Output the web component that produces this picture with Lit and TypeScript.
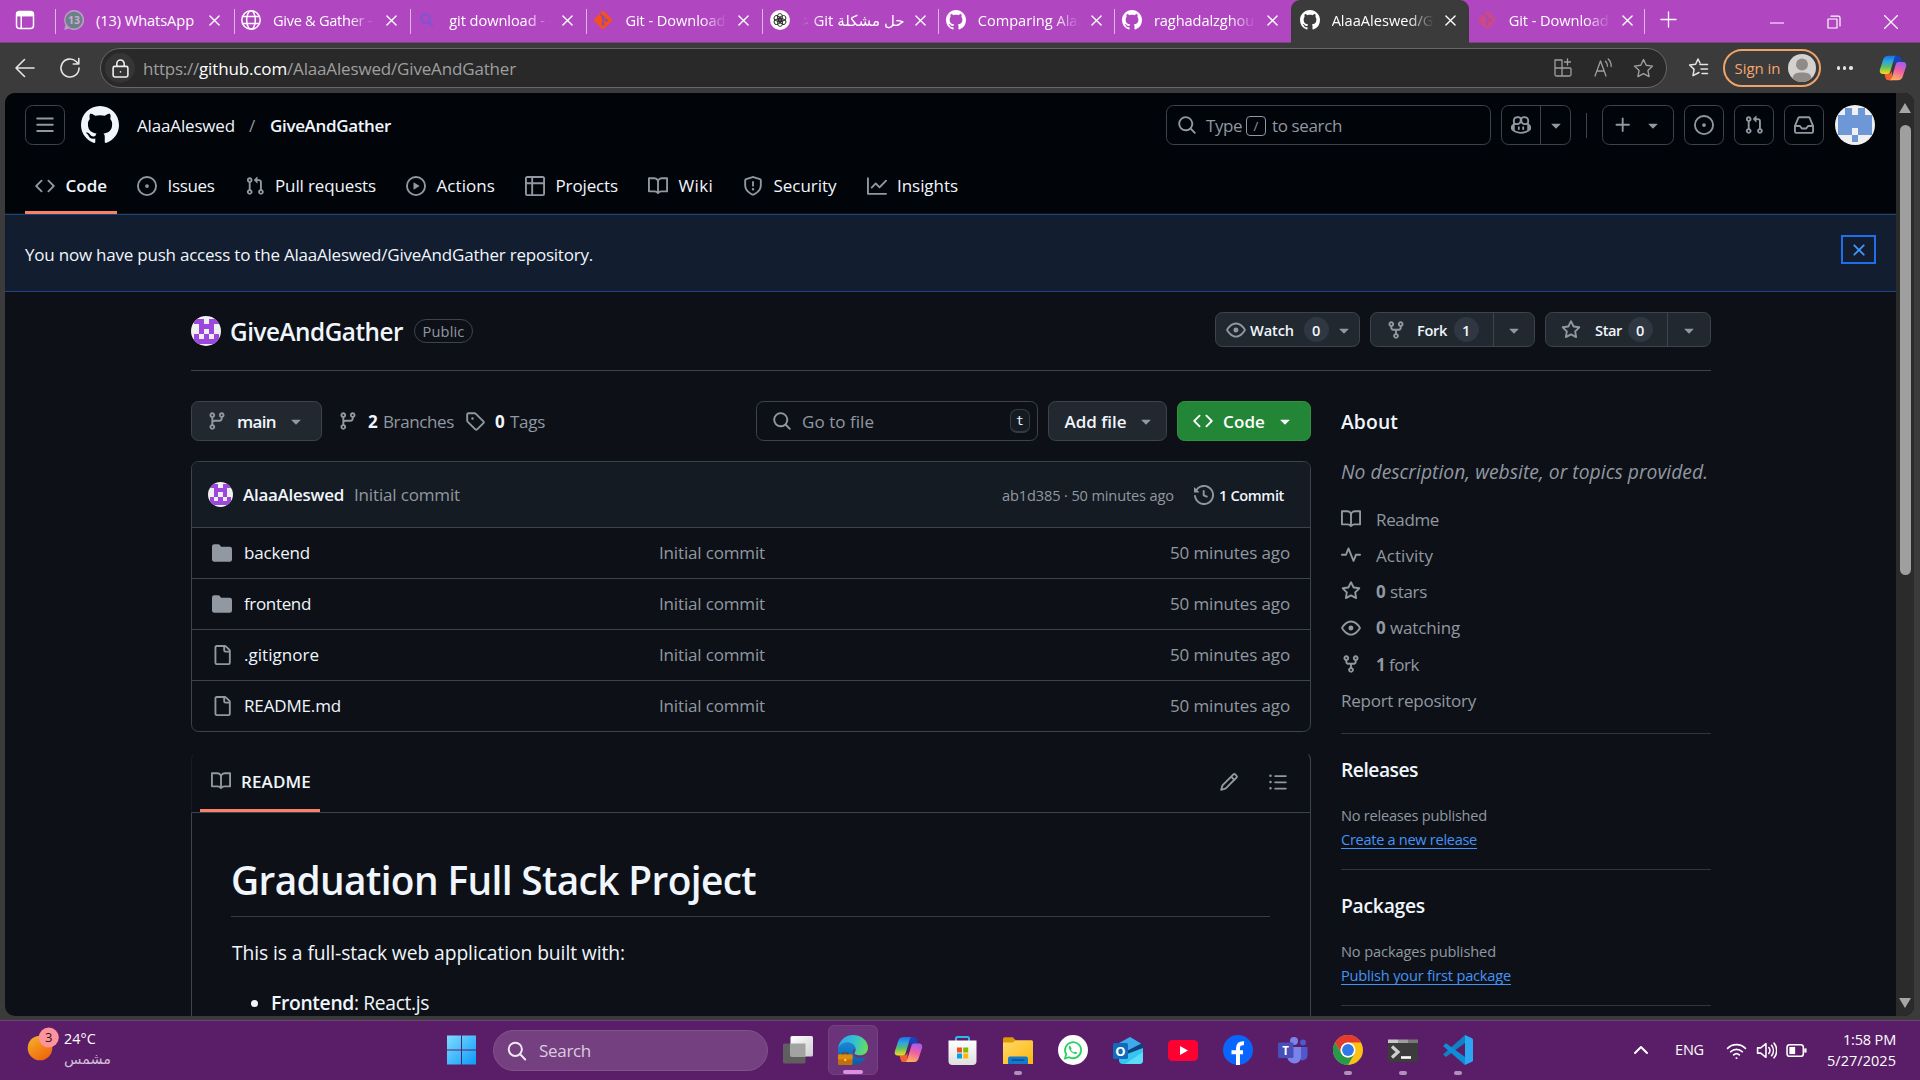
import { LitElement, html, svg, css, nothing } from "lit";
import { customElement, property } from "lit/decorators.js";

const P: Record<string, string> = {
  bars: "M1 2.75A.75.75 0 0 1 1.75 2h12.5a.75.75 0 0 1 0 1.5H1.75A.75.75 0 0 1 1 2.75Zm0 5A.75.75 0 0 1 1.75 7h12.5a.75.75 0 0 1 0 1.5H1.75A.75.75 0 0 1 1 7.75ZM1.75 12h12.5a.75.75 0 0 1 0 1.5H1.75a.75.75 0 0 1 0-1.5Z",
  github: "M8 0c4.42 0 8 3.58 8 8a8.013 8.013 0 0 1-5.45 7.59c-.4.08-.55-.17-.55-.38 0-.27.01-1.13.01-2.2 0-.75-.25-1.23-.54-1.48 1.78-.2 3.65-.88 3.65-3.95 0-.88-.31-1.59-.82-2.15.08-.2.36-1.02-.08-2.12 0 0-.67-.22-2.2.82-.64-.18-1.32-.27-2-.27-.68 0-1.36.09-2 .27-1.53-1.03-2.2-.82-2.2-.82-.44 1.1-.16 1.92-.08 2.12-.51.56-.82 1.28-.82 2.15 0 3.06 1.86 3.75 3.64 3.95-.23.2-.44.55-.51 1.07-.46.21-1.61.55-2.33-.66-.15-.24-.6-.83-1.23-.82-.67.01-.27.38.01.53.34.19.73.9.82 1.13.16.45.68 1.31 2.69.94 0 .67.01 1.3.01 1.49 0 .21-.15.45-.55.38A7.995 7.995 0 0 1 0 8c0-4.42 3.58-8 8-8Z",
  code: "m11.28 3.22 4.25 4.25a.75.75 0 0 1 0 1.06l-4.25 4.25a.749.749 0 0 1-1.275-.326.749.749 0 0 1 .215-.734L13.94 8l-3.72-3.72a.749.749 0 0 1 .326-1.275.749.749 0 0 1 .734.215Zm-6.56 0a.751.751 0 0 1 1.042.018.751.751 0 0 1 .018 1.042L2.06 8l3.72 3.72a.749.749 0 0 1-.326 1.275.749.749 0 0 1-.734-.215L.47 8.53a.75.75 0 0 1 0-1.06Z",
  issue: "M8 9.5a1.5 1.5 0 1 0 0-3 1.5 1.5 0 0 0 0 3ZM8 0a8 8 0 1 1 0 16A8 8 0 0 1 8 0ZM1.5 8a6.5 6.5 0 1 0 13 0 6.5 6.5 0 0 0-13 0Z",
  pr: "M1.5 3.25a2.25 2.25 0 1 1 3 2.122v5.256a2.251 2.251 0 1 1-1.5 0V5.372A2.25 2.25 0 0 1 1.5 3.25Zm5.677-.177L9.573.677A.25.25 0 0 1 10 .854V2.5h1A2.5 2.5 0 0 1 13.5 5v5.628a2.251 2.251 0 1 1-1.5 0V5a1 1 0 0 0-1-1h-1v1.646a.25.25 0 0 1-.427.177L7.177 3.427a.25.25 0 0 1 0-.354ZM3.75 2.5a.75.75 0 1 0 0 1.5.75.75 0 0 0 0-1.5Zm0 9.5a.75.75 0 1 0 0 1.5.75.75 0 0 0 0-1.5Zm8.25.75a.75.75 0 1 0 1.5 0 .75.75 0 0 0-1.5 0Z",
  play: "M8 0a8 8 0 1 1 0 16A8 8 0 0 1 8 0ZM1.5 8a6.5 6.5 0 1 0 13 0 6.5 6.5 0 0 0-13 0Zm4.879-2.773 4.264 2.559a.25.25 0 0 1 0 .428l-4.264 2.559A.25.25 0 0 1 6 10.559V5.442a.25.25 0 0 1 .379-.215Z",
  table: "M0 1.75C0 .784.784 0 1.75 0h12.5C15.216 0 16 .784 16 1.75v12.5A1.75 1.75 0 0 1 14.25 16H1.75A1.75 1.75 0 0 1 0 14.25ZM6.5 6.5v8h7.75a.25.25 0 0 0 .25-.25V6.5Zm8-1.5V1.75a.25.25 0 0 0-.25-.25H6.5V5Zm-13 1.5v7.75c0 .138.112.25.25.25H5v-8ZM5 5V1.5H1.75a.25.25 0 0 0-.25.25V5Z",
  book: "M0 1.75A.75.75 0 0 1 .75 1h4.253c1.227 0 2.317.59 3 1.501A3.743 3.743 0 0 1 11.006 1h4.245a.75.75 0 0 1 .75.75v10.5a.75.75 0 0 1-.75.75h-4.507a2.25 2.25 0 0 0-1.591.659l-.622.621a.75.75 0 0 1-1.06 0l-.622-.621A2.25 2.25 0 0 0 5.258 13H.75a.75.75 0 0 1-.75-.75Zm7.251 10.324.004-5.073-.002-2.253A2.25 2.25 0 0 0 5.003 2.5H1.5v9h3.757a3.75 3.75 0 0 1 1.994.574ZM8.755 4.75l-.004 7.322a3.752 3.752 0 0 1 1.992-.572H14.5v-9h-3.495a2.25 2.25 0 0 0-2.25 2.25Z",
  shield: "M7.467.133a1.748 1.748 0 0 1 1.066 0l5.25 1.68A1.75 1.75 0 0 1 15 3.48V7c0 1.566-.32 3.182-1.303 4.682-.983 1.498-2.585 2.813-5.032 3.855a1.697 1.697 0 0 1-1.33 0c-2.447-1.042-4.049-2.357-5.032-3.855C1.32 10.182 1 8.566 1 7V3.48a1.75 1.75 0 0 1 1.217-1.667Zm.61 1.429a.25.25 0 0 0-.153 0l-5.25 1.68a.25.25 0 0 0-.174.238V7c0 1.358.275 2.666 1.057 3.86.784 1.194 2.121 2.34 4.366 3.297a.196.196 0 0 0 .154 0c2.245-.956 3.582-2.104 4.366-3.298C13.225 9.666 13.5 8.36 13.5 7V3.48a.251.251 0 0 0-.174-.237l-5.25-1.68ZM8.75 4.75v3a.75.75 0 0 1-1.5 0v-3a.75.75 0 0 1 1.5 0ZM9 10.5a1 1 0 1 1-2 0 1 1 0 0 1 2 0Z",
  graph: "M1.5 1.75V13.5h13.75a.75.75 0 0 1 0 1.5H.75a.75.75 0 0 1-.75-.75V1.75a.75.75 0 0 1 1.5 0Zm14.28 2.53-5.25 5.25a.75.75 0 0 1-1.06 0L7 7.06 4.28 9.78a.751.751 0 0 1-1.042-.018.751.751 0 0 1-.018-1.042l3.25-3.25a.75.75 0 0 1 1.06 0L10 7.94l4.72-4.72a.751.751 0 0 1 1.042.018.751.751 0 0 1 .018 1.042Z",
  search: "M10.68 11.74a6 6 0 0 1-7.922-8.982 6 6 0 0 1 8.982 7.922l3.04 3.04a.749.749 0 0 1-.326 1.275.749.749 0 0 1-.734-.215ZM11.5 7a4.499 4.499 0 1 0-8.997 0A4.499 4.499 0 0 0 11.5 7Z",
  copilot: "M7.998 15.035c-4.562 0-7.873-2.914-7.998-3.749V9.338c.085-.628.677-1.686 1.588-2.065.013-.07.024-.143.036-.218.029-.183.06-.384.126-.612-.201-.508-.254-1.084-.254-1.656 0-.87.128-1.769.693-2.484.579-.733 1.494-1.124 2.724-1.261 1.206-.134 2.262.034 2.944.765.05.053.096.108.139.165.044-.057.094-.112.143-.165.682-.731 1.738-.899 2.944-.765 1.23.137 2.145.528 2.724 1.261.566.715.693 1.614.693 2.484 0 .572-.053 1.148-.254 1.656.066.228.098.429.126.612.012.076.024.148.037.218.924.385 1.522 1.471 1.591 2.095v1.872c0 .766-3.351 3.795-8.002 3.795Zm0-1.485c2.28 0 4.584-1.11 5.002-1.433V7.862l-.023-.116c-.49.21-1.075.291-1.727.291-1.146 0-2.059-.327-2.71-.991A3.222 3.222 0 0 1 8 6.303a3.24 3.24 0 0 1-.544.743c-.65.664-1.563.991-2.71.991-.652 0-1.236-.081-1.727-.291l-.023.116v4.255c.419.323 2.722 1.433 5.002 1.433ZM6.762 2.83c-.193-.206-.637-.413-1.682-.297-1.019.113-1.479.404-1.713.7-.247.312-.369.789-.369 1.554 0 .793.129 1.171.308 1.371.162.181.519.379 1.442.379.853 0 1.339-.235 1.638-.54.315-.322.527-.827.617-1.553.117-.935-.037-1.395-.241-1.614Zm4.155-.297c-1.044-.116-1.488.091-1.681.297-.204.219-.359.679-.242 1.614.091.726.303 1.231.618 1.553.299.305.784.54 1.638.54.922 0 1.28-.198 1.442-.379.179-.2.308-.578.308-1.371 0-.765-.123-1.242-.37-1.554-.233-.296-.693-.587-1.713-.7ZM6.25 9.037a.75.75 0 0 1 .75.75v1.501a.75.75 0 0 1-1.5 0V9.787a.75.75 0 0 1 .75-.75Zm4.25.75v1.501a.75.75 0 0 1-1.5 0V9.787a.75.75 0 0 1 1.5 0Z",
  plus: "M7.75 2a.75.75 0 0 1 .75.75V7h4.25a.75.75 0 0 1 0 1.5H8.5v4.25a.75.75 0 0 1-1.5 0V8.5H2.75a.75.75 0 0 1 0-1.5H7V2.75A.75.75 0 0 1 7.75 2Z",
  inbox: "M2.8 2.06A1.75 1.75 0 0 1 4.41 1h7.18c.7 0 1.333.417 1.61 1.06l2.74 6.395c.04.093.06.194.06.295v4.5A1.75 1.75 0 0 1 14.25 15H1.75A1.75 1.75 0 0 1 0 13.25v-4.5c0-.101.02-.202.06-.295Zm1.61.44a.25.25 0 0 0-.23.152L1.887 8H4.75a.75.75 0 0 1 .6.3L6.625 10h2.75l1.275-1.7a.75.75 0 0 1 .6-.3h2.863L11.82 2.652a.25.25 0 0 0-.23-.152Zm10.09 7h-2.875l-1.275 1.7a.75.75 0 0 1-.6.3h-3.5a.75.75 0 0 1-.6-.3L4.375 9.5H1.5v3.75c0 .138.112.25.25.25h12.5a.25.25 0 0 0 .25-.25Z",
  caret: "m4.427 7.427 3.396 3.396a.25.25 0 0 0 .354 0l3.396-3.396A.25.25 0 0 0 11.396 7H4.604a.25.25 0 0 0-.177.427Z",
  x: "M3.72 3.72a.75.75 0 0 1 1.06 0L8 6.94l3.22-3.22a.749.749 0 0 1 1.275.326.749.749 0 0 1-.215.734L9.06 8l3.22 3.22a.749.749 0 0 1-.326 1.275.749.749 0 0 1-.734-.215L8 9.06l-3.22 3.22a.751.751 0 0 1-1.042-.018.751.751 0 0 1-.018-1.042L6.94 8 3.72 4.78a.75.75 0 0 1 0-1.06Z",
  eye: "M8 2c1.981 0 3.671.992 4.933 2.078 1.27 1.091 2.187 2.345 2.637 3.023a1.62 1.62 0 0 1 0 1.798c-.45.678-1.367 1.932-2.637 3.023C11.67 13.008 9.981 14 8 14c-1.981 0-3.671-.992-4.933-2.078C1.797 10.83.88 9.576.43 8.898a1.62 1.62 0 0 1 0-1.798c.45-.677 1.367-1.931 2.637-3.022C4.33 2.992 6.019 2 8 2ZM1.679 7.932a.12.12 0 0 0 0 .136c.411.622 1.241 1.75 2.366 2.717C5.176 11.758 6.527 12.5 8 12.5c1.473 0 2.825-.742 3.955-1.715 1.124-.967 1.954-2.096 2.366-2.717a.12.12 0 0 0 0-.136c-.412-.621-1.242-1.75-2.366-2.717C10.824 4.242 9.473 3.5 8 3.5c-1.473 0-2.825.742-3.955 1.715-1.124.967-1.954 2.096-2.366 2.717ZM8 10a2 2 0 1 1-.001-3.999A2 2 0 0 1 8 10Z",
  fork: "M5 5.372v.878c0 .414.336.75.75.75h4.5a.75.75 0 0 0 .75-.75v-.878a2.25 2.25 0 1 1 1.5 0v.878a2.25 2.25 0 0 1-2.25 2.25h-1.5v2.128a2.251 2.251 0 1 1-1.5 0V8.5h-1.5A2.25 2.25 0 0 1 3.5 6.25v-.878a2.25 2.25 0 1 1 1.5 0ZM5 3.25a.75.75 0 1 0-1.5 0 .75.75 0 0 0 1.5 0Zm6.75.75a.75.75 0 1 0 0-1.5.75.75 0 0 0 0 1.5Zm-3 8.75a.75.75 0 1 0-1.5 0 .75.75 0 0 0 1.5 0Z",
  star: "M8 .25a.75.75 0 0 1 .673.418l1.882 3.815 4.21.612a.75.75 0 0 1 .416 1.279l-3.046 2.97.719 4.192a.751.751 0 0 1-1.088.791L8 12.347l-3.766 1.98a.75.75 0 0 1-1.088-.79l.72-4.194L.818 6.374a.75.75 0 0 1 .416-1.28l4.21-.611L7.327.668A.75.75 0 0 1 8 .25Zm0 2.445L6.615 5.5a.75.75 0 0 1-.564.41l-3.097.45 2.24 2.184a.75.75 0 0 1 .216.664l-.528 3.084 2.769-1.456a.75.75 0 0 1 .698 0l2.77 1.456-.53-3.084a.75.75 0 0 1 .216-.664l2.24-2.183-3.096-.45a.75.75 0 0 1-.564-.41L8 2.694Z",
  branch: "M9.5 3.25a2.25 2.25 0 1 1 3 2.122V6A2.5 2.5 0 0 1 10 8.5H6a1 1 0 0 0-1 1v1.128a2.251 2.251 0 1 1-1.5 0V5.372a2.25 2.25 0 1 1 1.5 0v1.836A2.493 2.493 0 0 1 6 7h4a1 1 0 0 0 1-1v-.628A2.25 2.25 0 0 1 9.5 3.25Zm-6 0a.75.75 0 1 0 1.5 0 .75.75 0 0 0-1.5 0Zm8.25-.75a.75.75 0 1 0 0 1.5.75.75 0 0 0 0-1.5ZM4.25 12a.75.75 0 1 0 0 1.5.75.75 0 0 0 0-1.5Z",
  tag: "M1 7.775V2.75C1 1.784 1.784 1 2.75 1h5.025c.464 0 .91.184 1.238.513l6.25 6.25a1.75 1.75 0 0 1 0 2.474l-5.026 5.026a1.75 1.75 0 0 1-2.474 0l-6.25-6.25A1.752 1.752 0 0 1 1 7.775Zm1.5 0c0 .066.026.13.073.177l6.25 6.25a.25.25 0 0 0 .354 0l5.025-5.025a.25.25 0 0 0 0-.354l-6.25-6.25a.25.25 0 0 0-.177-.073H2.75a.25.25 0 0 0-.25.25ZM6 5a1 1 0 1 1 0 2 1 1 0 0 1 0-2Z",
  history: "m.427 1.927 1.215 1.215a8.002 8.002 0 1 1-1.6 5.685.75.75 0 1 1 1.493-.154 6.5 6.5 0 1 0 1.18-4.458l1.358 1.358A.25.25 0 0 1 3.896 6H.25A.25.25 0 0 1 0 5.75V2.104a.25.25 0 0 1 .427-.177ZM7.75 4a.75.75 0 0 1 .75.75v2.992l2.028.812a.75.75 0 0 1-.557 1.392l-2.5-1A.751.751 0 0 1 7 8.25v-3.5A.75.75 0 0 1 7.75 4Z",
  folder: "M1.75 1A1.75 1.75 0 0 0 0 2.75v10.5C0 14.216.784 15 1.75 15h12.5A1.75 1.75 0 0 0 16 13.25v-8.5A1.75 1.75 0 0 0 14.25 3H7.5a.25.25 0 0 1-.2-.1l-.9-1.2C6.07 1.26 5.55 1 5 1H1.75Z",
  file: "M2 1.75C2 .784 2.784 0 3.75 0h6.586c.464 0 .909.184 1.237.513l2.914 2.914c.329.328.513.773.513 1.237v9.586A1.75 1.75 0 0 1 13.25 16h-9.5A1.75 1.75 0 0 1 2 14.25Zm1.75-.25a.25.25 0 0 0-.25.25v12.5c0 .138.112.25.25.25h9.5a.25.25 0 0 0 .25-.25V6h-2.75A1.75 1.75 0 0 1 9 4.25V1.5Zm6.75.062V4.25c0 .138.112.25.25.25h2.688l-.011-.013-2.914-2.914-.013-.011Z",
  pencil: "M11.013 1.427a1.75 1.75 0 0 1 2.474 0l1.086 1.086a1.75 1.75 0 0 1 0 2.474l-8.61 8.61c-.21.21-.47.364-.756.445l-3.251.93a.75.75 0 0 1-.927-.928l.929-3.25c.081-.286.235-.547.445-.758l8.61-8.61Zm.176 4.823L9.75 4.81l-6.286 6.287a.253.253 0 0 0-.064.108l-.558 1.953 1.953-.558a.253.253 0 0 0 .108-.064Zm1.238-3.763a.25.25 0 0 0-.354 0L10.811 3.75l1.439 1.44 1.263-1.263a.25.25 0 0 0 0-.354Z",
  list: "M5.75 2.5h8.5a.75.75 0 0 1 0 1.5h-8.5a.75.75 0 0 1 0-1.5Zm0 5h8.5a.75.75 0 0 1 0 1.5h-8.5a.75.75 0 0 1 0-1.5Zm0 5h8.5a.75.75 0 0 1 0 1.5h-8.5a.75.75 0 0 1 0-1.5ZM2 14a1 1 0 1 1 0-2 1 1 0 0 1 0 2Zm1-6a1 1 0 1 1-2 0 1 1 0 0 1 2 0ZM2 4a1 1 0 1 1 0-2 1 1 0 0 1 0 2Z",
  pulse: "M6 2c.306 0 .582.187.696.471L10 10.731l1.304-3.26A.751.751 0 0 1 12 7h3.25a.75.75 0 0 1 0 1.5h-2.742l-1.812 4.528a.751.751 0 0 1-1.392 0L6 4.77 4.696 8.03A.75.75 0 0 1 4 8.5H.75a.75.75 0 0 1 0-1.5h2.742l1.812-4.529A.751.751 0 0 1 6 2Z",
};

const oct = (name: string, size = 20, cls = "") =>
  html`<svg class="ic ${cls}" width=${size} height=${size} viewBox="0 0 16 16"><path fill="currentColor" d=${P[name]} /></svg>`;

/** Stroked line icon on an arbitrary square view box. */
const line = (box: number, size: number, d: string, w = 1.4) =>
  html`<svg class="ic" width=${size} height=${size} viewBox="0 0 ${box} ${box}" fill="none" stroke="currentColor"
    stroke-width=${w} stroke-linecap="round" stroke-linejoin="round"><path d=${d} /></svg>`;

const identicon = (size: number, rows: string[], color: string) => html`
  <svg class="ic ident" width=${size} height=${size} viewBox="0 0 12 12" shape-rendering="crispEdges">
    <rect width="12" height="12" fill="#f0f0f0" />
    ${rows.flatMap((r, y) => [...r].map((c, x) =>
      c === "#" ? svg`<rect x=${1 + x * 2} y=${1 + y * 2} width="2" height="2" fill=${color} />` : nothing))}
  </svg>`;
const purpleRows = ["##.##", ".###.", ".#.#.", "#.#.#", "#####"];
const blueRows = [".#.#.", "#####", "#####", "##.##", "..#.."];

/** Text run whose tracking is computed so that it spans a given width. */
@customElement("fit-text")
export class FitText extends LitElement {
  @property({ type: Number }) w = 0;
  @property() text = "";
  static styles = css`
    :host { display: inline-block; flex: none; white-space: pre; padding-top: 0.07em; }
  `;
  render() { return html`<span>${this.text}</span>`; }
  updated() {
    const s = this.renderRoot.querySelector("span") as HTMLElement;
    s.style.letterSpacing = "0px";
    const natural = s.getBoundingClientRect().width;
    const n = [...this.text].length;
    if (this.w && natural) {
      s.style.letterSpacing = `${(this.w - natural) / n}px`;
      this.style.width = `${this.w}px`;
    }
  }
}
const t = (text: string, w = 0, cls = "") => html`<fit-text class=${cls} .text=${text} .w=${w}></fit-text>`;

const gitLogo = (fill: string, fg: string) => html`<svg class="ic" width="20" height="20" viewBox="0 0 20 20">
  <rect x="3.2" y="3.2" width="13.6" height="13.6" rx="1" transform="rotate(45 10 10)" fill=${fill} />
  <path d="M7 3.8l3 3V14M10 7l3.2 3.2" stroke=${fg} stroke-width="1.3" fill="none" />
  <circle cx="10" cy="7" r="1.5" fill=${fg} /><circle cx="10" cy="14" r="1.5" fill=${fg} /><circle cx="13.3" cy="10.3" r="1.5" fill=${fg} /></svg>`;
const ghTab = html`<svg class="ic" width="20" height="20" viewBox="0 0 16 16"><path fill="#fff" d=${P.github} /></svg>`;

const copilotLogo = (size: number, id: string) => html`<svg class="ic" width=${size} height=${size} viewBox="0 0 30 30">
  <defs>
    <linearGradient id="${id}a" x1="0" y1="0" x2="0" y2="1"><stop offset="0" stop-color="#1b6fe0"/><stop offset=".3" stop-color="#2aa5e8"/><stop offset=".6" stop-color="#5bbf6a"/><stop offset="1" stop-color="#f4d91f"/></linearGradient>
    <linearGradient id="${id}b" x1=".6" y1="0" x2=".3" y2="1"><stop offset="0" stop-color="#a45df0"/><stop offset=".45" stop-color="#ee5fa5"/><stop offset="1" stop-color="#ffb258"/></linearGradient>
  </defs>
  <path d="M16 2h4.500c1.500 0 2.500 1 3 2.500l1.200 4.500h-5.200c-1.800 0-2.800 1-3.300 2.800Z" fill="#1544b8"/>
  <path d="M14 28H9.800c-1.500 0-2.500-1-2.900-2.500L5.600 21h5c1.800 0 2.800-1 3.300-2.800Z" fill="#f2602f"/>
  <path d="M10 2h8.500c-1.200.4-1.900 1.500-2.300 2.900L12 19c-.5 1.600-1.500 2.300-3 2.300H4.500C1.500 21.300.2 19.500 1 16.500L4.500 6C5.400 3.200 7 2 10 2Z" fill="url(#${id}a)"/>
  <path d="M20 28h-8.500c1.200-.4 1.900-1.500 2.300-2.900L18 11c.5-1.600 1.500-2.300 3-2.300h4.500c3 0 4.300 1.800 3.500 4.800L25.500 24c-.9 2.800-2.500 4-5.500 4Z" fill="url(#${id}b)"/></svg>`;

interface Tab { icon: unknown; label: string; w: number; active?: boolean; rtl?: boolean; last?: boolean }
const tabs: Tab[] = [
  { icon: html`<svg class="ic" width="20" height="20" viewBox="0 0 20 20"><path d="M10 0a10 10 0 1 1-5 18.600L.2 20 1.500 15A10 10 0 0 1 10 0Z" fill="#b9a0c6"/><circle cx="10" cy="10" r="8.600" fill="#6d7f88"/><text x="10" y="14" font-size="10.500" font-weight="700" text-anchor="middle" fill="#c3b0cf" font-family="Open Sans, sans-serif">13</text></svg>`, label: "(13) WhatsApp", w: 98 },
  { icon: html`<svg class="ic" width="20" height="20" viewBox="0 0 20 20" fill="none" stroke="#fff" stroke-width="1.500"><circle cx="10" cy="10" r="9.200"/><ellipse cx="10" cy="10" rx="4.300" ry="9.200"/><path d="M1.500 6.500h17M1.500 13.500h17"/></svg>`, label: "Give & Gather - G", w: 113 },
  { icon: html`<svg class="ic" width="20" height="20" viewBox="0 0 20 20" fill="none" stroke="#7d55d0" stroke-width="2.200"><circle cx="8.500" cy="8.500" r="4.300"/><path d="M11.600 11.800l4 4"/></svg>`, label: "git download - G", w: 110 },
  { icon: gitLogo("#f4511e", "#8a4bb0"), label: "Git - Downloads", w: 107 },
  { icon: html`<svg class="ic" width="20" height="20" viewBox="0 0 20 20"><circle cx="10" cy="10" r="10" fill="#fff"/><g fill="none" stroke="#2a2a2a" stroke-width=".9">${[0, 60, 120, 180, 240, 300].map(a => svg`<rect x="7.500" y="3.600" width="4.800" height="7.600" rx="2.400" transform="rotate(${a} 10 10)"/>`)}</g></svg>`, label: "حل مشكلة Git عند", w: 0, rtl: true },
  { icon: ghTab, label: "Comparing AlaaA", w: 117 },
  { icon: ghTab, label: "raghadalzghoul/", w: 109 },
  { icon: ghTab, label: "AlaaAleswed/Give", w: 121, active: true },
  { icon: gitLogo("#c94a86", "#a847b6"), label: "Git - Downloads", w: 107, last: true },
];

const nav = [
  ["code", "Code", 41.5], ["issue", "Issues", 47], ["pr", "Pull requests", 101], ["play", "Actions", 58.5],
  ["table", "Projects", 62.5], ["book", "Wiki", 34.5], ["shield", "Security", 63], ["graph", "Insights", 61],
] as const;
const files = [["folder", "backend", 66], ["folder", "frontend", 67], ["file", ".gitignore", 75], ["file", "README.md", 97]] as const;

const app = (body: unknown, state = "") => html`<div class="app ${state}"><svg width="30" height="30" viewBox="0 0 30 30">
  ${body}</svg>${state ? html`<i class="ind"></i>` : nothing}</div>`;

@customElement("app-root")
export class AppRoot extends LitElement {
  static styles = css`
    :host { display: block; width: 1920px; height: 1080px; overflow: hidden; background: #3b3b3b; color: #f0f6fc;
      font-family: "Open Sans", "Noto Sans", "DejaVu Sans", sans-serif; font-size: 17px; line-height: 1.4; }
    * { box-sizing: border-box; }
    .ic { display: block; flex: none; }
    .ident { border-radius: 50%; }
    .row { display: flex; align-items: center; }
    .b { font-weight: 600; }
    .m { color: #9198a1; }
    .hi { color: #f0f6fc; font-weight: 700; }
    .sp4 { width: 4px; }
    .sp10 { width: 10px; }
    .shell { display: flex; flex-direction: column; height: 1080px; }

    .tabs { display: flex; height: 43px; background: #b046c0; border-bottom: 1px solid #7b4383; color: #fff; font-size: 14.6px; flex: none; }
    .wsicon { width: 55px; padding: 10px 0 0 15px; }
    .tab { width: 176.2px; height: 42px; display: flex; align-items: center; padding: 0 0 2px 7.5px; position: relative; flex: none; }
    .tab::before { content: ""; position: absolute; left: 0; top: 9px; width: 1px; height: 25px; background: #dfb5e6; }
    .tab.first { width: 178.5px; padding-left: 9px; }
    .tab.active { width: 178.5px; height: 43px; background: #3b3b3b; border-radius: 9px 9px 0 0; padding-left: 9px; padding-bottom: 3px; }
    .tab.active::before, .tab.last::before { display: none; }
    .tab.last::after { content: ""; position: absolute; right: 0; top: 9px; width: 1px; height: 25px; background: #dfb5e6; }
    .tab .lbl { margin-left: 12px; width: 103px; overflow: hidden; white-space: nowrap;
      -webkit-mask-image: linear-gradient(90deg, #000 74%, transparent 99%); }
    .tab.first .lbl { -webkit-mask-image: none; }
    .tab .lbl.rtl { direction: rtl; width: 102px; margin-left: 13px; font-size: 15px; -webkit-mask-image: linear-gradient(270deg, #000 84%, transparent 100%); }
    .tab .x { margin-left: 10px; }
    .newtab { width: 44px; padding: 11px 0 0 15px; }
    .win { margin-left: auto; display: flex; padding: 15px 22px 0 0; gap: 43px; }

    .bar { height: 50px; display: flex; align-items: center; flex: none; padding-left: 14px; color: #e4e4e4; }
    .bar .re { margin-left: 23px; }
    .addr { margin-left: 19px; width: 1567px; height: 40px; border: 1.500px solid #686868; border-radius: 20px; background: #292929;
      display: flex; align-items: center; color: #9f9f9f; padding: 0 12px 0 4px; }
    .lock { width: 30px; height: 30px; border-radius: 50%; background: #353535; display: grid; place-items: center; color: #eee; margin-right: 8px; }
    .addr .host { color: #fff; }
    .addr .end { margin-left: auto; display: flex; align-items: center; gap: 20px; }
    .favs { margin-left: 20px; }
    .sign { margin-left: 13.500px; width: 98px; height: 38px; border-radius: 19px; border: 2px solid #f0a268; color: #f5a76d; font-size: 15px;
      display: flex; align-items: center; justify-content: space-between; padding: 0 3px 0 10px; }
    .dots { display: flex; gap: 3px; margin: 0 26px 0 16px; }
    .dots i { width: 3.400px; height: 3.400px; border-radius: 50%; background: #e4e4e4; }

    .view { display: flex; height: 923px; margin: 0 6px 0 5px; border-radius: 10px; overflow: hidden; background: #0d1117; flex: none; }
    .page { width: 1891px; display: flex; flex-direction: column; overflow: hidden; }
    .scroll { width: 18px; background: #2b2b2b; display: flex; flex-direction: column; align-items: center; padding: 10px 0 8px; }
    .scroll .thumb { width: 11px; height: 450px; border-radius: 6px; background: #9f9f9f; margin-top: 12px; }
    .scroll .dn { margin-top: auto; }
    .head { background: #010409; height: 121px; border-bottom: 1px solid #11161d; padding: 12px 21px 0 20px; flex: none; }
    .head .row { height: 40px; }
    .head .row fit-text, .tools fit-text { padding-top: 0.16em; }
    .btn { height: 40px; border: 1px solid #3d444d; border-radius: 7.500px; display: flex; align-items: center; justify-content: center; color: #9198a1; flex: none; }
    .sq { width: 40px; }
    .logo { margin: 0 18px 0 16px; }
    .slash { color: #9198a1; margin: 0 13px 0 14px; }
    .find { width: 325px; margin-left: auto; justify-content: flex-start; padding-left: 10px; }
    .type { margin-left: 9px; }
    .key { width: 20px; height: 20px; border: 1px solid #9198a1; border-radius: 4px; display: grid; place-items: center; font-size: 13px; line-height: 1; margin: 2px 6px 0 4px; }
    .split { width: 70px; margin-left: 10px; }
    .split > * { height: 38px; display: grid; place-items: center; }
    .split .l { width: 39px; border-right: 1px solid #3d444d; }
    .split .r { flex: 1; }
    .vline { width: 1px; height: 25px; background: #3d444d; margin: 0 15px; }
    .new { width: 72px; gap: 10px; margin-right: 10px; }
    .gap10 { margin-right: 10px; }
    .gap11 { margin-right: 11px; }
    .nav { display: flex; gap: 10px; margin-top: 12px; height: 57px; }
    .nav div { display: flex; align-items: center; gap: 10.500px; padding: 0 10px; color: #f0f6fc; height: 57px; }
    .nav .ic { color: #9198a1; }
    .nav .sel { border-bottom: 3px solid #f78166; font-weight: 600; padding-top: 3px; }
    .flash { height: 78px; background: #121d2f; border-top: 1px solid #1d4277; border-bottom: 1px solid #1f4788; display: flex; justify-content: space-between; padding: 0 20px; flex: none; }
    .flash .msg { align-self: center; padding-top: 2px; }
    .flash .cls { width: 35px; height: 29px; border: 2px solid #1f6feb; margin-top: 20px; display: grid; place-items: center; color: #4493f8; }

    .wrap { width: 1520px; margin-left: 186px; }
    .title { height: 79px; border-bottom: 1px solid #3d444d; display: flex; padding-top: 20px; }
    .title .name { display: flex; align-items: center; height: 38px; font-size: 24.300px; font-weight: 600; gap: 10px; }
    .title .name > fit-text { margin-left: -1px; margin-right: 1px; }
    .pill { font-size: 14.600px; font-weight: 400; color: #9198a1; width: 59px; height: 24px; border: 1px solid #3d444d; border-radius: 13px; display: grid; place-items: center; margin-top: -1px; }
    .acts { margin-left: auto; display: flex; gap: 10px; font-size: 14.600px; font-weight: 600; color: #f0f6fc; }
    .act { height: 35px; background: #212830; border: 1px solid #3d444d; border-radius: 7.500px; display: flex; align-items: center; }
    .act .ic { color: #9198a1; }
    .cnt { width: 25px; height: 25px; border-radius: 13px; background: #2f3742; display: grid; place-items: center; }
    .watch { width: 145px; padding-left: 10px; }
    .watch .cnt { margin: 0 5px 0 10px; }
    .fk { width: 165px; padding-left: 15px; }
    .fk > fit-text { margin-left: 11px; }
    .fk .cnt { margin: 0 14px 0 7px; }
    .st { width: 166px; }
    .st > fit-text { margin-left: 14px; }
    .st .cnt { margin: 0 14px 0 6px; }
    .act .more { border-left: 1px solid #3d444d; height: 33px; flex: 1; display: grid; place-items: center; }
    .cols { display: flex; gap: 30px; padding-top: 30px; }
    .main { width: 1120px; }
    .tools { display: flex; align-items: center; height: 40px; }
    .bt { margin-left: 16px; gap: 5px; }
    .tg { margin-left: 11px; gap: 5px; }
    .bt .ic, .tg .ic { margin-right: 5px; }
    .fill { background: #212830; color: #f0f6fc; font-weight: 600; }
    .fill .ic { color: #9198a1; }
    .brn { width: 131px; gap: 10px; }
    .goto { width: 282px; margin-left: auto; justify-content: flex-start; padding: 0 7px 0 15px; gap: 10px; }
    .goto .k { margin-left: auto; width: 20px; height: 24px; border: 1px solid #343b44; border-bottom-width: 2px; border-radius: 7px; background: #151b23; color: #f0f6fc;
      font: 13px/1 "DejaVu Sans Mono", monospace; display: grid; place-items: center; }
    .add { width: 119px; margin: 0 10px; gap: 9px; padding-left: 5px; }
    .green { width: 134px; background: #238636; border-color: #2f9142; color: #fff; font-weight: 600; gap: 10px; }
    .tbl { margin-top: 20px; border: 1px solid #3d444d; border-radius: 7.500px; overflow: hidden; }
    .tbl .h { height: 65px; background: #151b23; display: flex; align-items: center; padding: 0 26px 0 16px; }
    .tbl .h .s { font-size: 14.600px; margin-left: auto; }
    .tbl .h .c { font-size: 14.600px; margin-left: 5px; }
    .tbl .h .hist { margin-left: 20px; }
    .tbl .f { height: 51px; border-top: 1px solid #3d444d; display: grid; grid-template-columns: 52px 415px 1fr auto; align-items: center; padding-right: 20px; }
    .tbl .f fit-text { padding-top: 0; }
    .tbl .f .ic { margin-left: 20px; }
    .rh { margin-top: 20px; height: 61px; border: 1px solid transparent; border-right-color: #3d444d; border-bottom-color: #3d444d; border-radius: 7.500px 7.500px 0 0;
      display: flex; align-items: stretch; padding-left: 8px; padding-right: 22px; border-left-color: #181d24; }
    .rt { width: 120px; border-bottom: 3px solid #f78166; display: flex; align-items: center; gap: 10px; padding-left: 11px; font-weight: 600; }
    .rt .ic, .rh > .ic { color: #9198a1; }
    .rh > .ic { align-self: center; margin: -2px 0 0 29px; }
    .rh > .pen { margin-left: auto; }
    .rb { height: 300px; border: 1px solid #3d444d; border-top: 0; padding: 39px 40px 0 39px; font-size: 19.300px; }
    .rb .h1 { font-size: 38.800px; font-weight: 600; line-height: 50px; border-bottom: 1px solid #343b44; height: 65px; }
    .rb .p { margin-top: 21px; height: 28px; display: flex; align-items: center; padding-left: 1px; }
    .rb .li { margin-top: 22px; height: 28px; display: flex; align-items: center; }
    .rb .li i { width: 7px; height: 7px; border-radius: 50%; background: #f0f6fc; margin: 2px 13px 0 20px; }
    .side { width: 370px; color: #9198a1; }
    .side .hd { font-size: 19.300px; font-weight: 600; color: #f0f6fc; height: 40px; display: flex; align-items: center; }
    .side .desc { font-size: 19.300px; font-style: italic; height: 30px; margin: 15px 0 15px; display: flex; align-items: center; }
    .side .li { height: 36.200px; display: flex; align-items: center; gap: 15px; }
    .side .n { margin-right: -11px; font-weight: 700; }
    .side hr { border: 0; height: 1px; background: #30363e; margin: 0; }
    .side .rule1 { margin-top: 15px; }
    .side .sec { padding: 16px 0 0; height: 135px; font-size: 14.600px; }
    .side .sec .hd { height: 38px; }
    .side .sec .t1 { height: 24px; margin-top: 15px; display: flex; align-items: center; }
    .side .sec .t2 { height: 24px; display: flex; align-items: center; color: #4493f8; }
    .side .sec .t2 span { border-bottom: 1px solid #4493f8; height: 20px; display: flex; align-items: center; }

    .task { margin-top: 4px; height: 60px; border-top: 1px solid #70437c; background: #5a1e68; display: flex; color: #fff; flex: none; }
    .wx { width: 437px; display: flex; padding: 6px 0 0 26px; font-size: 14.300px; }
    .wx .tx { margin-left: 5px; padding-top: 1px; display: flex; flex-direction: column; gap: 0; }
    .wx .ar { font-size: 14.300px; color: #d3bfd8; line-height: 20px; direction: rtl; text-align: left; }
    .app { width: 50px; height: 50px; margin: 4px 5px 0 0; display: flex; flex-direction: column; align-items: center; padding-top: 10px; border-radius: 6px; flex: none; }
    .app svg { flex: none; }
    .app.on { background: #6b3379; border: 1px solid #75417f; padding-top: 9px; }
    .ind { width: 8px; height: 4px; border-radius: 2px; background: #b18fba; margin-top: 6px; }
    .app.on .ind { width: 20px; background: #de8fe3; margin-top: 5px; }
    .ts { width: 275px; height: 41px; border-radius: 21px; background: #74407f; border: 1px solid #82528d; margin: 9px 5px 0 1px; display: flex; align-items: center; padding-left: 13px; gap: 12px; color: #dccbe0; }
    .tray { margin-left: auto; display: flex; align-items: center; padding-right: 24px; font-size: 14.500px; height: 58px; }
    .eng { margin: 0 22px 0 26px; }
    .icons { display: flex; gap: 9px; align-items: center; }
    .clock { display: flex; flex-direction: column; align-items: flex-end; margin-left: 19px; line-height: 20px; width: 70px; }
  `;

  private tabStrip() {
    return html`<div class="tabs">
      <div class="wsicon"><svg class="ic" width="20" height="20" viewBox="0 0 20 20" fill="none" stroke="#fff" stroke-width="1.500"><rect x="1.500" y="1.500" width="17" height="17" rx="3"/><path d="M1.500 4.200h17" stroke-width="4.500"/><path d="M6.200 6v12.500"/></svg></div>
      ${tabs.map((tb, i) => html`<div class="tab ${i === 0 ? "first" : ""} ${tb.active ? "active" : ""} ${tb.last ? "last" : ""}">
        ${tb.icon}<div class="lbl ${tb.rtl ? "rtl" : ""}">${t(tb.label, tb.w)}</div>
        <div class="x">${line(12, 11, "M1 1l10 10M11 1L1 11", 1.5)}</div></div>`)}
      <div class="newtab">${line(18, 17, "M9 1v16M1 9h16", 1.4)}</div>
      <div class="win">${line(14, 14, "M0 8h14", 1.2)}${line(14, 14, "M1 4v9h9V4zM4 1.200h7.500a1.500 1.500 0 0 1 1.500 1.500V11", 1.2)}${line(14, 14, "M.5.5l13 13M13.500.5l-13 13", 1.2)}</div>
    </div>`;
  }

  private toolbar() {
    return html`<div class="bar">
      ${line(22, 22, "M20 11H2M10.500 2.500L2 11l8.500 8.500", 1.6)}
      <div class="re">${line(22, 22, "M20 11a9 9 0 1 1-2.800-6.500L19.500 7M19.800 1.500V7h-5.500", 1.6)}</div>
      <div class="addr">
        <div class="lock">${line(18, 19, "M3.500 7h11a1.500 1.500 0 0 1 1.500 1.500v7a1.500 1.500 0 0 1-1.500 1.500h-11A1.500 1.500 0 0 1 2 15.500v-7A1.500 1.500 0 0 1 3.500 7ZM5.500 7V4.500a3.500 3.500 0 0 1 7 0V7M9 12v.2", 1.5)}</div>
        ${t("https://", 56)}${t("github.com", 88, "host")}${t("/AlaaAleswed/GiveAndGather", 229)}
        <div class="end">
          ${line(20, 20, "M2 2h7v16H3.500A1.500 1.500 0 0 1 2 16.500ZM2 10h15a1 1 0 0 1 1 1v5.500a1.500 1.500 0 0 1-1.500 1.500H9M14.500 1v6M11.500 4h6", 1.3)}
          ${line(20, 20, "M2 18L7.500 3 13 18M4 13h7M12.500 3.200c1.500 1.500 2 3 2 5M15.200 1c2.200 2 3 4.500 3 7.500", 1.3)}
          ${line(20, 21, "M10 1.500l2.600 5.400 6 .8-4.400 4.100 1.100 5.900L10 14.800l-5.300 2.900 1.100-5.900L1.400 7.700l6-.8Z", 1.3)}
        </div>
      </div>
      <div class="favs">${line(22, 22, "M13 7.500h7.500M14 12h6.500M15 16.500h5.500M12 15.500l-6 3.200 1.100-6.300L2.600 8l6-.8L11 2l2 4", 1.5)}</div>
      <div class="sign">${t("Sign in", 46)}<svg class="ic" width="28" height="28" viewBox="0 0 28 28"><circle cx="14" cy="14" r="14" fill="#d4d2cf"/><circle cx="14" cy="10.500" r="6" fill="#8f8b88"/><path d="M4.500 24.300C5 19.500 9 18.500 14 18.500s9 1 9.500 5.800A14 14 0 0 1 4.500 24.300Z" fill="#8f8b88"/></svg></div>
      <div class="dots"><i></i><i></i><i></i></div>
      ${copilotLogo(28, "c1")}
    </div>`;
  }

  private header() {
    return html`<div class="head">
      <div class="row">
        <div class="btn sq">${oct("bars")}</div>
        <div class="logo">${oct("github", 38)}</div>
        ${t("AlaaAleswed", 98)}<span class="slash">${t("/", 8)}</span>${t("GiveAndGather", 121, "b")}
        <div class="btn find">${oct("search")}${t("Type", 36, "type")}<div class="key">/</div>${t("to search", 70)}</div>
        <div class="btn split"><div class="l">${oct("copilot")}</div><div class="r">${oct("caret")}</div></div>
        <div class="vline"></div>
        <div class="btn new">${oct("plus")}${oct("caret")}</div>
        <div class="btn sq gap10">${oct("issue")}</div>
        <div class="btn sq gap10">${oct("pr")}</div>
        <div class="btn sq gap11">${oct("inbox")}</div>
        ${identicon(40, blueRows, "#6d97d6")}
      </div>
      <div class="nav">${nav.map(([i, l, w], k) => html`<div class=${k ? "" : "sel"}>${oct(i)}${t(l, w)}</div>`)}</div>
    </div>
    <div class="flash"><div class="msg">${t("You now have push access to the AlaaAleswed/GiveAndGather repository.", 568)}</div><div class="cls">${oct("x")}</div></div>`;
  }

  private repo() {
    const purple = "#9c47de";
    return html`<div class="wrap">
      <div class="title">
        <div class="name">${identicon(30, purpleRows, purple)}${t("GiveAndGather", 173)}<div class="pill">${t("Public", 42)}</div></div>
        <div class="acts">
          <div class="act watch">${oct("eye")}<span class="sp4"></span>${t("Watch", 44)}<div class="cnt">${t("0", 9)}</div>${oct("caret")}</div>
          <div class="act fk">${oct("fork")}${t("Fork", 30)}<div class="cnt">${t("1", 9)}</div><div class="more">${oct("caret")}</div></div>
          <div class="act fk st">${oct("star")}${t("Star", 27)}<div class="cnt">${t("0", 9)}</div><div class="more">${oct("caret")}</div></div>
        </div>
      </div>
      <div class="cols">
        <div class="main">
          <div class="tools">
            <div class="btn fill brn">${oct("branch")}${t("main", 39)}${oct("caret")}</div>
            <div class="row m bt">${oct("branch")}${t("2", 10, "hi")}${t("Branches", 71)}</div>
            <div class="row m tg">${oct("tag")}${t("0", 10, "hi")}${t("Tags", 35)}</div>
            <div class="btn goto">${oct("search")}${t("Go to file", 72)}<div class="k">t</div></div>
            <div class="btn fill add">${t("Add file", 62)}${oct("caret")}</div>
            <div class="btn green">${oct("code")}${t("Code", 42)}${oct("caret")}</div>
          </div>
          <div class="tbl">
            <div class="h">${identicon(25, purpleRows, purple)}<span class="sp10"></span>${t("AlaaAleswed", 101, "b")}<span class="sp10"></span>${t("Initial commit", 106, "m")}
              ${t("ab1d385 · 50 minutes ago", 172, "m s")}<span class="m hist">${oct("history")}</span>${t("1 Commit", 65, "b c")}</div>
            ${files.map(([i, n, w]) => html`<div class="f"><span class="m">${oct(i)}</span>${t(n, w)}${t("Initial commit", 106, "m")}${t("50 minutes ago", 120, "m")}</div>`)}
          </div>
          <div class="rh"><div class="rt">${oct("book")}${t("README", 70)}</div>${oct("pencil", 20, "pen")}${oct("list")}</div>
          <div class="rb">
            <div class="h1">${t("Graduation Full Stack Project", 525)}</div>
            <div class="p">${t("This is a full-stack web application built with:", 393)}</div>
            <div class="li"><i></i>${t("Frontend", 83, "b")}${t(": React.js", 75)}</div>
          </div>
        </div>
        <div class="side">
          <div class="hd">${t("About", 57)}</div>
          <div class="desc">${t("No description, website, or topics provided.", 367)}</div>
          <div class="li">${oct("book")}${t("Readme", 63)}</div>
          <div class="li">${oct("pulse")}${t("Activity", 57)}</div>
          <div class="li">${oct("star")}${t("0", 10, "n")}${t("stars", 37)}</div>
          <div class="li">${oct("eye")}${t("0", 10, "n")}${t("watching", 70)}</div>
          <div class="li">${oct("fork")}${t("1", 9, "n")}${t("fork", 30)}</div>
          <div class="li">${t("Report repository", 135)}</div>
          <hr class="rule1" />
          <div class="sec"><div class="hd">${t("Releases", 77)}</div><div class="t1">${t("No releases published", 146)}</div><div class="t2"><span>${t("Create a new release", 136)}</span></div></div>
          <hr />
          <div class="sec"><div class="hd">${t("Packages", 84)}</div><div class="t1">${t("No packages published", 155)}</div><div class="t2"><span>${t("Publish your first package", 170)}</span></div></div>
          <hr />
        </div>
      </div>
    </div>`;
  }

  private taskbar() {
    return html`<div class="task">
      <div class="wx">
        <svg class="ic" width="33" height="36" viewBox="0 0 33 36"><defs><linearGradient id="sun" x1="0" y1="0" x2=".7" y2="1"><stop offset="0" stop-color="#f3b62c"/><stop offset="1" stop-color="#f0640c"/></linearGradient></defs>
          <circle cx="14" cy="21" r="12.300" fill="url(#sun)"/><circle cx="22.800" cy="10.500" r="10" fill="#ff939b"/><text x="22.800" y="15.300" text-anchor="middle" font-size="13" fill="#1b1b1b" font-family="Open Sans, sans-serif">3</text></svg>
        <div class="tx">${t("24°C", 32)}<span class="ar">مشمس</span></div>
      </div>
      ${app(svg`<defs><linearGradient id="w" gradientUnits="userSpaceOnUse" x1="0" y1="0" x2="30" y2="30"><stop offset="0" stop-color="#80dcff"/><stop offset="1" stop-color="#0a98fb"/></linearGradient></defs><path fill="url(#w)" d="M0 .5h14v14H0ZM15 .5h14v14H15ZM0 15.500h14v14H0ZM15 15.500h14v14H15Z"/>`)}
      <div class="ts"><svg class="ic" width="20" height="20" viewBox="0 0 20 20" fill="none" stroke="#f1e8f3" stroke-width="2" stroke-linecap="round"><circle cx="8.300" cy="8.300" r="6.600"/><path d="M13.200 13.200l5 5.300"/></svg>${t("Search", 52)}</div>
      ${app(svg`<defs><linearGradient id="tv" x1="0" y1="0" x2="1" y2="1"><stop offset="0" stop-color="#fff"/><stop offset="1" stop-color="#cfcfcf"/></linearGradient></defs><rect x="0" y="8.500" width="22.500" height="20" rx="1.500" fill="#5f5f5f"/><rect x="7.500" y="1" width="22.500" height="20.500" rx="1.500" fill="url(#tv)"/><rect x="7.500" y="8.500" width="15" height="13" fill="#a3a3a3"/>`)}
      ${app(svg`<defs><linearGradient id="e1" x1="0" y1=".3" x2="1" y2=".5"><stop offset="0" stop-color="#2fa6e8"/><stop offset=".55" stop-color="#35c1cf"/><stop offset="1" stop-color="#66df55"/></linearGradient><linearGradient id="e2" x1="0" y1="0" x2="0" y2="1"><stop offset="0" stop-color="#1789da"/><stop offset="1" stop-color="#0c59a4"/></linearGradient></defs>
        <path d="M0 15C.5 9 6 7 10.500 7.500c5 1 7.500 4 7 6-2.500 1-3.500 4-2 6.500 2 3 7 4 12.500 2C25 27 20.500 30 15 30 6 30-.5 23.500 0 15Z" fill="url(#e2)"/>
        <path d="M0 14C.8 6 7 0 15 0c9 0 15 6.200 15 12.500 0 5-3.600 7.800-8 7.800-4 0-6-1.300-5.500-2.300 1.800-2.500 1.500-6.600-1.500-8.800C10 5.800 2 7.500 0 14Z" fill="url(#e1)"/>
        <rect x="0" y="19.500" width="14.500" height="10.500" rx="1" fill="#c06f0d"/><rect x="0" y="19.500" width="14.500" height="5" rx="1" fill="#e08a12"/><path d="M4.800 19.500v-1.500h5v1.500" stroke="#7a430a" stroke-width="1.200" fill="none"/><circle cx="7.300" cy="25" r="1.200" fill="#ffd24a"/>`, "on")}
      <div class="app">${copilotLogo(29, "c2")}</div>
      ${app(svg`<defs><linearGradient id="st" x1="0" y1="0" x2="0" y2="1"><stop offset="0" stop-color="#fff"/><stop offset="1" stop-color="#dedede"/></linearGradient></defs><path d="M8 7V3.500a1.500 1.500 0 0 1 1.500-1.500h10a1.500 1.500 0 0 1 1.500 1.500V7" fill="none" stroke="#2eb9ec" stroke-width="2"/><path d="M.5 5.500h28V26a4 4 0 0 1-4 4h-20a4 4 0 0 1-4-4Z" fill="url(#st)"/><path fill="#f04f24" d="M9 12.500h5v5H9z"/><path fill="#7fb900" d="M15.200 12.500h5v5h-5z"/><path fill="#00a3ee" d="M9 18.500h5v5H9z"/><path fill="#feb801" d="M15.200 18.500h5v5h-5z"/>`)}
      ${app(svg`<defs><linearGradient id="fo" x1="0" y1="0" x2="1" y2="1"><stop offset="0" stop-color="#ffd968"/><stop offset="1" stop-color="#fbb70f"/></linearGradient></defs><path d="M0 4a1.800 1.800 0 0 1 1.800-1.800h8L13 5.500V10H0Z" fill="#dd9a06"/><path d="M0 7.500h9.500L13 5.300h15.500A1.500 1.500 0 0 1 30 6.800v22.200H0Z" fill="url(#fo)"/><path d="M5 29v-5.500a2 2 0 0 1 2-2h16a2 2 0 0 1 2 2V29Z" fill="#1479cb"/><rect x="8.500" y="24.300" width="13" height="1.500" rx=".7" fill="#0b4f90"/>`, "run")}
      ${app(svg`<circle cx="15" cy="15" r="15" fill="#fff"/><path d="M7 23.500l1.200-4.200a8 8 0 1 1 3 2.900Z" fill="none" stroke="#2bcf63" stroke-width="1.800"/><path d="M12 10.500c-.9.3-1.500 1.300-1.200 2.600.8 3 3 5.100 6 5.900 1.300.3 2.300-.3 2.500-1.300l-2.300-1.300-1.200 1c-1.400-.6-2.300-1.500-2.900-2.800l.8-1.200Z" fill="#2bcf63"/>`)}
      ${app(svg`<path d="M6 10L17 2l13 8v9H6Z" fill="#1066b8"/><path d="M6 8l11-6 11 6.500L14 16Z" fill="#3eaae9"/><path d="M14 16L30 8v6l-14 8Z" fill="#123f7e"/><path d="M6 22l24-9v12a4 4 0 0 1-4 4H10a4 4 0 0 1-4-4Z" fill="#34c5f1"/><path d="M12 29l18-12v8a4 4 0 0 1-4 4Z" fill="#5cdcf9"/><rect x="0" y="8" width="15" height="16" rx="1.500" fill="#0f6cbd"/><text x="7.500" y="20.800" text-anchor="middle" font-size="13" font-weight="700" fill="#fff" font-family="Open Sans, sans-serif">O</text>`)}
      ${app(svg`<rect x="0" y="5" width="30" height="21" rx="4.500" fill="#ff0033"/><path d="M12 11l8 4.500-8 4.500Z" fill="#fff"/>`)}
      ${app(svg`<circle cx="15" cy="15" r="15" fill="#0866ff"/><path d="M15 30V13.500c0-4 1.800-5.500 6-5.200M8.500 17.300H20" fill="none" stroke="#fff" stroke-width="4"/>`)}
      ${app(svg`<circle cx="16" cy="6" r="4" fill="#7b83eb"/><circle cx="25" cy="7.500" r="3" fill="#5059c9"/><path d="M20 12h9.500v8.500a5 5 0 0 1-7 4.500Z" fill="#5059c9"/><path d="M9 12h14v9.500c0 4-2.800 7-6.500 7S9.500 25.500 9 21.500Z" fill="#7b83eb"/><rect x="0" y="7.500" width="15.500" height="15.500" rx="1.500" fill="#4650b8"/><text x="7.700" y="19.500" text-anchor="middle" font-size="11.500" font-weight="700" fill="#fff" font-family="Open Sans, sans-serif">T</text>`)}
      ${app(svg`<circle cx="15" cy="15" r="15" fill="#fbc116"/><path d="M2 7.500A15 15 0 0 1 28 7.500H15a7.500 7.500 0 0 0-6.500 11.200Z" fill="#e33b2e"/><path d="M2 7.500l6.500 11.200A7.500 7.500 0 0 0 21.500 18.700L15 30A15 15 0 0 1 2 7.500Z" fill="#269a4a"/><circle cx="15" cy="15" r="7.500" fill="#fff"/><circle cx="15" cy="15" r="5.900" fill="#3178ea"/>`, "run")}
      ${app(svg`<path d="M0 4.500h10V9H0Z" fill="#c8c8c8"/><path d="M10 4.500h10V9H10Z" fill="#9d9d9d"/><path d="M20 4.500h10V9H20Z" fill="#777"/><path d="M0 8h30v17.500a1.500 1.500 0 0 1-1.500 1.500h-27A1.500 1.500 0 0 1 0 25.500Z" fill="#3c3c3c"/><path d="M4 11.500l6 5.500-6 5.500" fill="none" stroke="#cfcfcf" stroke-width="3.200"/><path d="M13 22.500h10" stroke="#fff" stroke-width="2.600"/>`, "run")}
      ${app(svg`<path d="M22 0l-22 19.500 3 2.500L22 8Z" fill="#1180c4"/><path d="M22 30L0 11l3-2.800L22 22Z" fill="#0f8ed6"/><path d="M22 0l7 3.200A1.800 1.800 0 0 1 30 4.800v20.400a1.800 1.800 0 0 1-1 1.600L22 30Z" fill="#2aa6f2"/>`, "run")}
      <div class="tray">
        ${line(16, 16, "M2 11l6-6 6 6", 2)}${t("ENG", 29, "eng")}
        <div class="icons">
          ${line(20, 21, "M1.500 8a12 12 0 0 1 17 0M4.500 11.200a8 8 0 0 1 11 0M7.300 14.200a4 4 0 0 1 5.400 0M9.800 17.200h.4", 1.6)}
          ${line(20, 21, "M1.500 7.500h3L9.500 3.500v13L4.500 12.500h-3ZM12.200 7.200a4.500 4.500 0 0 1 0 5.600M14.800 5a8 8 0 0 1 0 10M17.200 3a11 11 0 0 1 0 14", 1.5)}
          <svg class="ic" width="21" height="21" viewBox="0 0 20 20"><rect x="1" y="4.500" width="15.500" height="11" rx="2.500" fill="none" stroke="#fff" stroke-width="1.500"/><rect x="3.200" y="6.600" width="5.500" height="6.800" fill="#fff"/><path d="M18.500 8v4" stroke="#fff" stroke-width="2.200"/></svg>
        </div>
        <div class="clock">${t("1:58 PM", 53)}${t("5/27/2025", 69)}</div>
      </div>
    </div>`;
  }

  render() {
    return html`<div class="shell">
      ${this.tabStrip()}${this.toolbar()}
      <div class="view">
        <div class="page">${this.header()}${this.repo()}</div>
        <div class="scroll"><svg class="ic" width="12" height="10" viewBox="0 0 12 10"><path d="M6 0l6 10H0Z" fill="#a6a6a6"/></svg><div class="thumb"></div><svg class="ic dn" width="12" height="10" viewBox="0 0 12 10"><path d="M6 10L0 0h12Z" fill="#a6a6a6"/></svg></div>
      </div>
      ${this.taskbar()}
    </div>`;
  }
}
